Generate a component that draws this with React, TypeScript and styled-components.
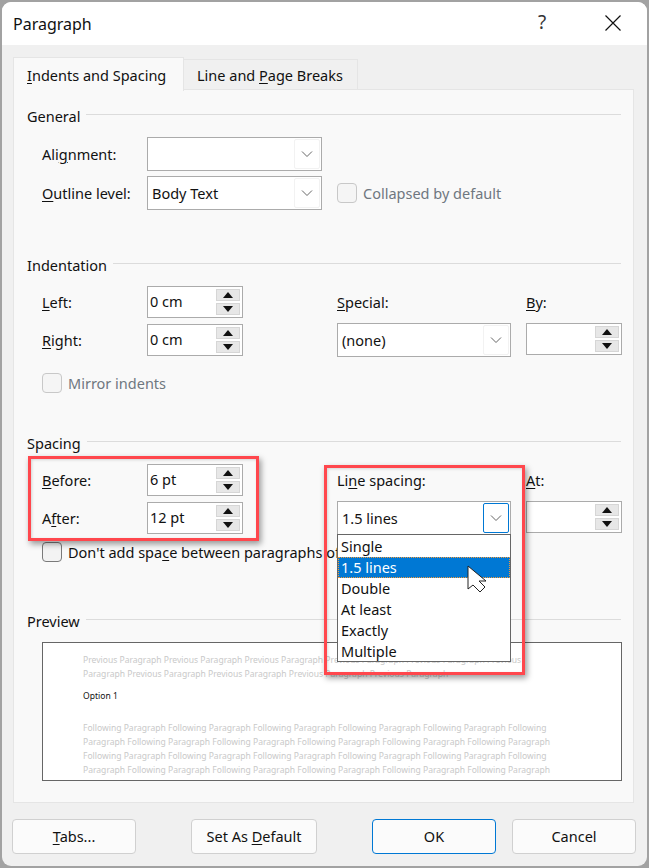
import React from 'react';
import styled, { createGlobalStyle } from 'styled-components';

const GlobalStyle = createGlobalStyle`
  html, body {
    margin: 0;
    padding: 0;
    width: 649px;
    height: 868px;
    overflow: hidden;
    background: #a2a2a2;
  }
  * { box-sizing: border-box; }
  u { text-underline-offset: 2px; text-decoration-thickness: 1px; }
`;

const Dialog = styled.div`
  position: relative;
  margin: 2px 0 0 2px;
  width: 645px;
  height: 864px;
  border-radius: 9px;
  overflow: hidden;
  background: #f0f0f0;
  color: #111;
  font-family: "Noto Sans", "Open Sans", sans-serif;
  font-size: 14.5px;
  line-height: 20px;
`;

const TitleBar = styled.div`
  height: 43px;
  background: #fff;
  display: flex;
  align-items: center;
  padding: 0 26px 0 11px;
  font-size: 16px;
`;

const TitleText = styled.div`
  flex: 1;
`;

const HelpMark = styled.div`
  width: 67px;
  margin-top: -4px;
  font-size: 19px;
  color: #333;
`;

const CloseIcon = styled.svg`
  margin-top: -2px;
`;

const Tabs = styled.div`
  display: flex;
  height: 45px;
  padding: 12px 0 0 11px;
`;

const Tab = styled.div<{ $active?: boolean }>`
  height: ${p => (p.$active ? 34 : 31)}px;
  margin-top: ${p => (p.$active ? 0 : 2)}px;
  width: ${p => (p.$active ? 171 : 174)}px;
  padding: ${p => (p.$active ? '7px 0 0 13px' : '5px 0 0 13px')};
  background: ${p => (p.$active ? '#f9f9f9' : '#f0f0f0')};
  border: 1px solid #e5e5e5;
  border-bottom: ${p => (p.$active ? 'none' : '1px solid #e5e5e5')};
  border-left: ${p => (p.$active ? '1px solid #e5e5e5' : 'none')};
  position: relative;
  z-index: ${p => (p.$active ? 1 : 0)};
`;

const Panel = styled.div`
  position: relative;
  margin-left: 11px;
  width: 621px;
  height: 714px;
  margin-top: -1px;
  padding: 16px 12px 0 13px;
  background: #f9f9f9;
  border: 1px solid #e5e5e5;
`;

const Section = styled.section<{ $gap: number }>`
  margin-top: ${p => p.$gap}px;
`;

const Legend = styled.div`
  display: flex;
  align-items: center;
  gap: 6px;
  height: 20px;

  &::after {
    content: '';
    flex: 1;
    height: 1px;
    margin-top: -3px;
    background: #dcdcdc;
  }
`;

const FieldRow = styled.div<{ $top: number }>`
  display: flex;
  align-items: center;
  margin: ${p => p.$top}px 0 0 15px;
`;

const Label = styled.div`
  width: 105px;
`;

const Columns = styled.div`
  display: grid;
  grid-template-columns: 310px 189px 96px;
`;

const Column = styled.div`
  display: flex;
  flex-direction: column;
`;

const ColumnLabel = styled.div`
  height: 20px;
  margin-top: 17px;
  margin-bottom: 11px;
`;

const Combo = styled.div<{ $width: number; $open?: boolean }>`
  position: relative;
  display: flex;
  align-items: center;
  width: ${p => p.$width}px;
  height: 34px;
  padding-left: 4px;
  background: #fff;
  border: 1px solid #ababab;
  border-bottom-color: ${p => (p.$open ? '#666' : '#ababab')};
`;

const ComboValue = styled.div`
  flex: 1;
`;

const Chevron = styled.div<{ $focused?: boolean }>`
  display: flex;
  align-items: center;
  justify-content: center;
  width: 26px;
  height: 30px;
  margin-right: 1px;
  border: 1px solid ${p => (p.$focused ? '#0078d4' : '#f2f2f2')};
  border-radius: 2px;
`;

const Spin = styled.div`
  display: flex;
  align-items: center;
  width: 96px;
  height: 32px;
  padding-left: 2px;
  background: #fff;
  border: 1px solid #ababab;
`;

const SpinValue = styled.div`
  flex: 1;
  margin-top: -3px;
`;

const SpinButtons = styled.div`
  display: flex;
  flex-direction: column;
  gap: 2px;
  width: 24px;
  margin-right: 2px;
`;

const SpinButton = styled.div`
  display: flex;
  align-items: center;
  justify-content: center;
  height: 12px;
  background: #e7e7e7;
  border: 1px solid #d6d6d6;
`;

const CheckRow = styled.div<{ $left?: number; $top?: number; $disabled?: boolean }>`
  display: flex;
  align-items: center;
  gap: 6px;
  margin: ${p => p.$top ?? 0}px 0 0 ${p => p.$left ?? 15}px;
  color: ${p => (p.$disabled ? '#6f7780' : '#111')};
  white-space: nowrap;
`;

const CheckBox = styled.div<{ $disabled?: boolean }>`
  flex-shrink: 0;
  width: 20px;
  height: 20px;
  border-radius: 4px;
  background: ${p => (p.$disabled ? '#f5f5f5' : '#f3f3f3')};
  border: 1px solid ${p => (p.$disabled ? '#c8c8c8' : '#7a7a7a')};
`;

const PreviewBox = styled.div`
  margin: 11px 0 0 15px;
  width: 580px;
  height: 139px;
  padding: 10px 0 0 40px;
  background: #fff;
  border: 1px solid #666;
  font-size: 8.55px;
  line-height: 14px;
  color: #c9c9c9;
  white-space: nowrap;
`;

const PreviewCurrent = styled.div`
  margin: 8px 0 18px;
  color: #111;
`;

const Footer = styled.div`
  display: flex;
  padding: 16px 0 0 10px;
`;

const FooterButton = styled.div<{ $width: number; $gap: number; $primary?: boolean }>`
  display: flex;
  align-items: center;
  justify-content: center;
  width: ${p => p.$width}px;
  height: 35px;
  padding-bottom: 2px;
  margin-left: ${p => p.$gap}px;
  background: #fbfbfb;
  border-radius: 4px;
  border: 1px solid ${p => (p.$primary ? '#0078d4' : '#d0d0d0')};
`;

const Callout = styled.div<{ $x: number; $y: number; $w: number; $h: number }>`
  position: absolute;
  left: ${p => p.$x}px;
  top: ${p => p.$y}px;
  width: ${p => p.$w}px;
  height: ${p => p.$h}px;
  border: 3px solid #ff474d;
  box-shadow: 2px 3px 6px rgba(0, 0, 0, 0.4), inset 1px 1px 3px rgba(0, 0, 0, 0.15);
  pointer-events: none;
  z-index: 3;
`;

const DropList = styled.div`
  position: absolute;
  left: -1px;
  top: 32px;
  width: 174px;
  height: 128px;
  padding-top: 1px;
  background: #fff;
  border: 1px solid #666;
  z-index: 4;
`;

const DropItem = styled.div<{ $selected?: boolean }>`
  height: 21px;
  line-height: ${p => (p.$selected ? 19 : 21)}px;
  padding-left: ${p => (p.$selected ? 2 : 3)}px;
  background: ${p => (p.$selected ? '#0078d4' : 'transparent')};
  color: ${p => (p.$selected ? '#fff' : '#111')};
  border: ${p => (p.$selected ? '1px dotted #f29a3a' : 'none')};
`;

const Pointer = styled.svg`
  position: absolute;
  left: 129px;
  top: 63px;
  z-index: 5;
`;

const ChevronIcon = () => (
  <svg width="12" height="8" viewBox="0 0 12 8">
    <path d="M1 1.5 L6 6.5 L11 1.5" fill="none" stroke="#666" strokeWidth="1" />
  </svg>
);

const Arrow = ({ down }: { down?: boolean }) => (
  <svg width="10" height="6" viewBox="0 0 10 6">
    <path d={down ? 'M0 0 H10 L5 6 Z' : 'M0 6 H10 L5 0 Z'} fill="#111" />
  </svg>
);

const Combobox = ({ width, value, focused, children }: { width: number; value?: string; focused?: boolean; children?: React.ReactNode }) => (
  <Combo $width={width} $open={focused}>
    <ComboValue>{value}</ComboValue>
    <Chevron $focused={focused}><ChevronIcon /></Chevron>
    {children}
  </Combo>
);

const Spinner = ({ value }: { value?: string }) => (
  <Spin>
    <SpinValue>{value}</SpinValue>
    <SpinButtons>
      <SpinButton><Arrow /></SpinButton>
      <SpinButton><Arrow down /></SpinButton>
    </SpinButtons>
  </Spin>
);

const lineOptions = ['Single', '1.5 lines', 'Double', 'At least', 'Exactly', 'Multiple'];

export default function App() {
  return (
    <>
      <GlobalStyle />
      <Dialog>
        <TitleBar>
          <TitleText>Paragraph</TitleText>
          <HelpMark>?</HelpMark>
          <CloseIcon width="16" height="16" viewBox="0 0 16 16">
            <path d="M0.5 0.5 L15.5 15.5 M15.5 0.5 L0.5 15.5" stroke="#111" strokeWidth="1.2" />
          </CloseIcon>
        </TitleBar>
        <Tabs>
          <Tab $active><u>I</u>ndents and Spacing</Tab>
          <Tab>Line and <u>P</u>age Breaks</Tab>
        </Tabs>
        <Panel>
          <Section $gap={0}>
            <Legend>General</Legend>
            <FieldRow $top={11}>
              <Label>Ali<u>g</u>nment:</Label>
              <Combobox width={175} />
            </FieldRow>
            <FieldRow $top={5}>
              <Label><u>O</u>utline level:</Label>
              <Combobox width={175} value="Body Text" />
              <CheckRow $left={15} $disabled>
                <CheckBox $disabled />
                <span>Collapsed by default</span>
              </CheckRow>
            </FieldRow>
          </Section>

          <Section $gap={45}>
            <Legend>Indentation</Legend>
            <Columns>
              <Column>
                <FieldRow $top={11}>
                  <Label><u>L</u>eft:</Label>
                  <Spinner value="0 cm" />
                </FieldRow>
                <FieldRow $top={6}>
                  <Label><u>R</u>ight:</Label>
                  <Spinner value="0 cm" />
                </FieldRow>
                <CheckRow $top={17} $disabled>
                  <CheckBox $disabled />
                  <span>Mirror indents</span>
                </CheckRow>
              </Column>
              <Column>
                <ColumnLabel><u>S</u>pecial:</ColumnLabel>
                <Combobox width={174} value="(none)" />
              </Column>
              <Column>
                <ColumnLabel><u>B</u>y:</ColumnLabel>
                <Spinner />
              </Column>
            </Columns>
          </Section>

          <Section $gap={40}>
            <Legend>Spacing</Legend>
            <Columns>
              <Column>
                <FieldRow $top={11}>
                  <Label><u>B</u>efore:</Label>
                  <Spinner value="6 pt" />
                </FieldRow>
                <FieldRow $top={6}>
                  <Label>A<u>f</u>ter:</Label>
                  <Spinner value="12 pt" />
                </FieldRow>
                <CheckRow $top={8}>
                  <CheckBox />
                  <span>Don't add spa<u>c</u>e between paragraphs of the same style</span>
                </CheckRow>
              </Column>
              <Column>
                <ColumnLabel>Li<u>n</u>e spacing:</ColumnLabel>
                <Combobox width={174} value="1.5 lines" focused>
                  <DropList>
                    {lineOptions.map((option, i) => (
                      <DropItem key={option} $selected={i === 1}>{option}</DropItem>
                    ))}
                  </DropList>
                  <Pointer width="20" height="28" viewBox="0 0 20 28">
                    <path
                      d="M1 1 V24 L6 20 L13 27 L18 22 L12 16 H19 Z"
                      fill="#fff"
                      stroke="#222"
                      strokeWidth="1"
                      strokeLinejoin="round"
                    />
                  </Pointer>
                </Combobox>
              </Column>
              <Column>
                <ColumnLabel><u>A</u>t:</ColumnLabel>
                <Spinner />
              </Column>
            </Columns>
          </Section>

          <Section $gap={49}>
            <Legend>Preview</Legend>
            <PreviewBox>
              <div>Previous Paragraph Previous Paragraph Previous Paragraph Previous Paragraph Previous Paragraph Previous</div>
              <div>Paragraph Previous Paragraph Previous Paragraph Previous Paragraph Previous Paragraph</div>
              <PreviewCurrent>Option 1</PreviewCurrent>
              <div>Following Paragraph Following Paragraph Following Paragraph Following Paragraph Following Paragraph Following</div>
              <div>Paragraph Following Paragraph Following Paragraph Following Paragraph Following Paragraph Following Paragraph</div>
              <div>Following Paragraph Following Paragraph Following Paragraph Following Paragraph Following Paragraph Following</div>
              <div>Paragraph Following Paragraph Following Paragraph Following Paragraph Following Paragraph Following Paragraph</div>
            </PreviewBox>
          </Section>

          <Callout $x={14} $y={366} $w={231} $h={85} />
          <Callout $x={310} $y={375} $w={201} $h={210} />
        </Panel>
        <Footer>
          <FooterButton $width={124} $gap={0}><span><u>T</u>abs...</span></FooterButton>
          <FooterButton $width={126} $gap={55}><span>Set As <u>D</u>efault</span></FooterButton>
          <FooterButton $width={124} $gap={55} $primary>OK</FooterButton>
          <FooterButton $width={124} $gap={16}>Cancel</FooterButton>
        </Footer>
      </Dialog>
    </>
  );
}
